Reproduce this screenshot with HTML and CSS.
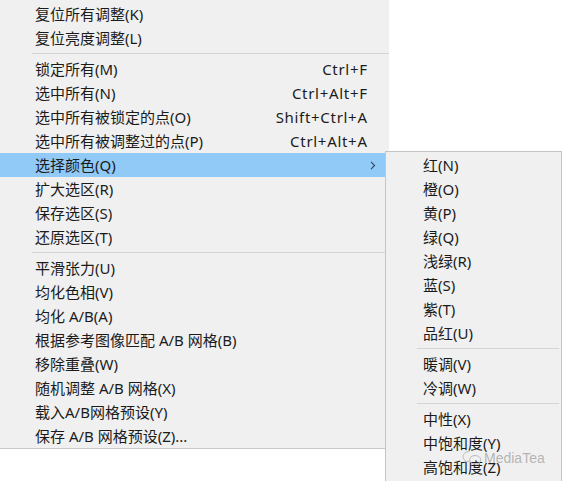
FILE: index.html
```html
<!DOCTYPE html>
<html lang="zh-CN">
<head>
<meta charset="utf-8">
<title>菜单</title>
<link rel="stylesheet" href="styles.css">
</head>
<body>
<div class="stage">
  <div class="menu main">
    <div class="item"><span class="label">复位所有调整(K)</span></div>
    <div class="item"><span class="label">复位亮度调整(L)</span></div>
    <div class="sep"></div>
    <div class="item"><span class="label">锁定所有(M)</span><span class="key">Ctrl+F</span></div>
    <div class="item"><span class="label">选中所有(N)</span><span class="key">Ctrl+Alt+F</span></div>
    <div class="item"><span class="label">选中所有被锁定的点(O)</span><span class="key">Shift+Ctrl+A</span></div>
    <div class="item"><span class="label">选中所有被调整过的点(P)</span><span class="key">Ctrl+Alt+A</span></div>
    <div class="item active"><span class="label">选择颜色(Q)</span><span class="arrow"><svg width="6" height="9" viewBox="0 0 6 9"><path d="M1 0.8 L4.6 4.5 L1 8.2" fill="none" stroke="#2f4760" stroke-width="1.1"/></svg></span></div>
    <div class="item"><span class="label">扩大选区(R)</span></div>
    <div class="item"><span class="label">保存选区(S)</span></div>
    <div class="item"><span class="label">还原选区(T)</span></div>
    <div class="sep"></div>
    <div class="item"><span class="label">平滑张力(U)</span></div>
    <div class="item"><span class="label">均化色相(V)</span></div>
    <div class="item"><span class="label">均化 A/B(A)</span></div>
    <div class="item"><span class="label">根据参考图像匹配 A/B 网格(B)</span></div>
    <div class="item"><span class="label">移除重叠(W)</span></div>
    <div class="item"><span class="label">随机调整 A/B 网格(X)</span></div>
    <div class="item"><span class="label">载入A/B网格预设(Y)</span></div>
    <div class="item"><span class="label">保存 A/B 网格预设(Z)...</span></div>
  </div>

  <div class="menu sub">
    <div class="item"><span class="label">红(N)</span></div>
    <div class="item"><span class="label">橙(O)</span></div>
    <div class="item"><span class="label">黄(P)</span></div>
    <div class="item"><span class="label">绿(Q)</span></div>
    <div class="item"><span class="label">浅绿(R)</span></div>
    <div class="item"><span class="label">蓝(S)</span></div>
    <div class="item"><span class="label">紫(T)</span></div>
    <div class="item"><span class="label">品红(U)</span></div>
    <div class="sep"></div>
    <div class="item"><span class="label">暖调(V)</span></div>
    <div class="item"><span class="label">冷调(W)</span></div>
    <div class="sep"></div>
    <div class="item"><span class="label">中性(X)</span></div>
    <div class="item"><span class="label">中饱和度(Y)</span></div>
    <div class="item"><span class="label">高饱和度(Z)</span></div>
  </div>

  <div class="watermark">
    <svg width="20" height="16" viewBox="0 0 20 16">
      <path d="M7.5 1.5 C3.8 1.5 1 3.8 1 6.6 C1 8.2 1.9 9.5 3.2 10.4 L2.7 12.2 L4.8 11.1 C5.6 11.4 6.5 11.6 7.5 11.6" fill="none" stroke="#bbbbbb" stroke-width="1"/>
      <path d="M13 5.5 C9.9 5.5 7.6 7.4 7.6 9.8 C7.6 12.2 9.9 14.1 13 14.1 C13.7 14.1 14.4 14 15 13.8 L16.8 14.8 L16.4 13.2 C17.9 12.4 18.8 11.2 18.8 9.8 C18.8 7.4 16.3 5.5 13 5.5 Z" fill="none" stroke="#bbbbbb" stroke-width="1"/>
    </svg>
    <span>MediaTea</span>
  </div>
</div>
</body>
</html>
```

FILE: styles.css
```css
html, body {
  margin: 0;
  padding: 0;
  background: #ffffff;
}

body {
  width: 562px;
  height: 481px;
  overflow: hidden;
  font-family: "Noto Sans", "Noto Sans CJK SC", sans-serif;
  font-size: 15px;
  color: #1b1b1b;
}

.stage {
  position: relative;
  width: 562px;
  height: 481px;
}

.menu {
  background: #f0f0f0;
  box-sizing: border-box;
}

.main {
  width: 389px;
  padding-top: 2px;
  border-bottom: 1px solid #c9c9c9;
}

.item {
  display: flex;
  align-items: center;
  height: 24px;
  line-height: 24px;
  white-space: nowrap;
}

.main .item {
  padding-left: 35px;
  padding-right: 22px;
}

.main .item.active {
  background: #91c9f7;
  margin-right: 3px;
  padding-right: 19px;
}

.key {
  margin-left: auto;
  letter-spacing: 0.7px;
  margin-right: -0.7px;
}

.arrow {
  margin-left: auto;
  margin-right: -9px;
  display: flex;
  align-items: center;
}

.sep {
  height: 1px;
  margin: 3px 0 3px 32px;
  background: #d4d4d4;
}

.main .sep:last-of-type {
  margin-top: 2px;
}

.sub {
  position: absolute;
  left: 385px;
  top: 151px;
  width: 177px;
  height: 340px;
  border: 1px solid #c4c4c4;
  padding-top: 1px;
}

.sub .item {
  padding-left: 37px;
}

.sub .sep {
  margin: 3px 2px 3px 31px;
}

.watermark {
  position: absolute;
  left: 462px;
  top: 450px;
  display: flex;
  align-items: center;
  gap: 2px;
  font-family: "Liberation Sans", sans-serif;
  font-size: 14px;
  color: rgba(170, 170, 170, 0.85);
}
```
